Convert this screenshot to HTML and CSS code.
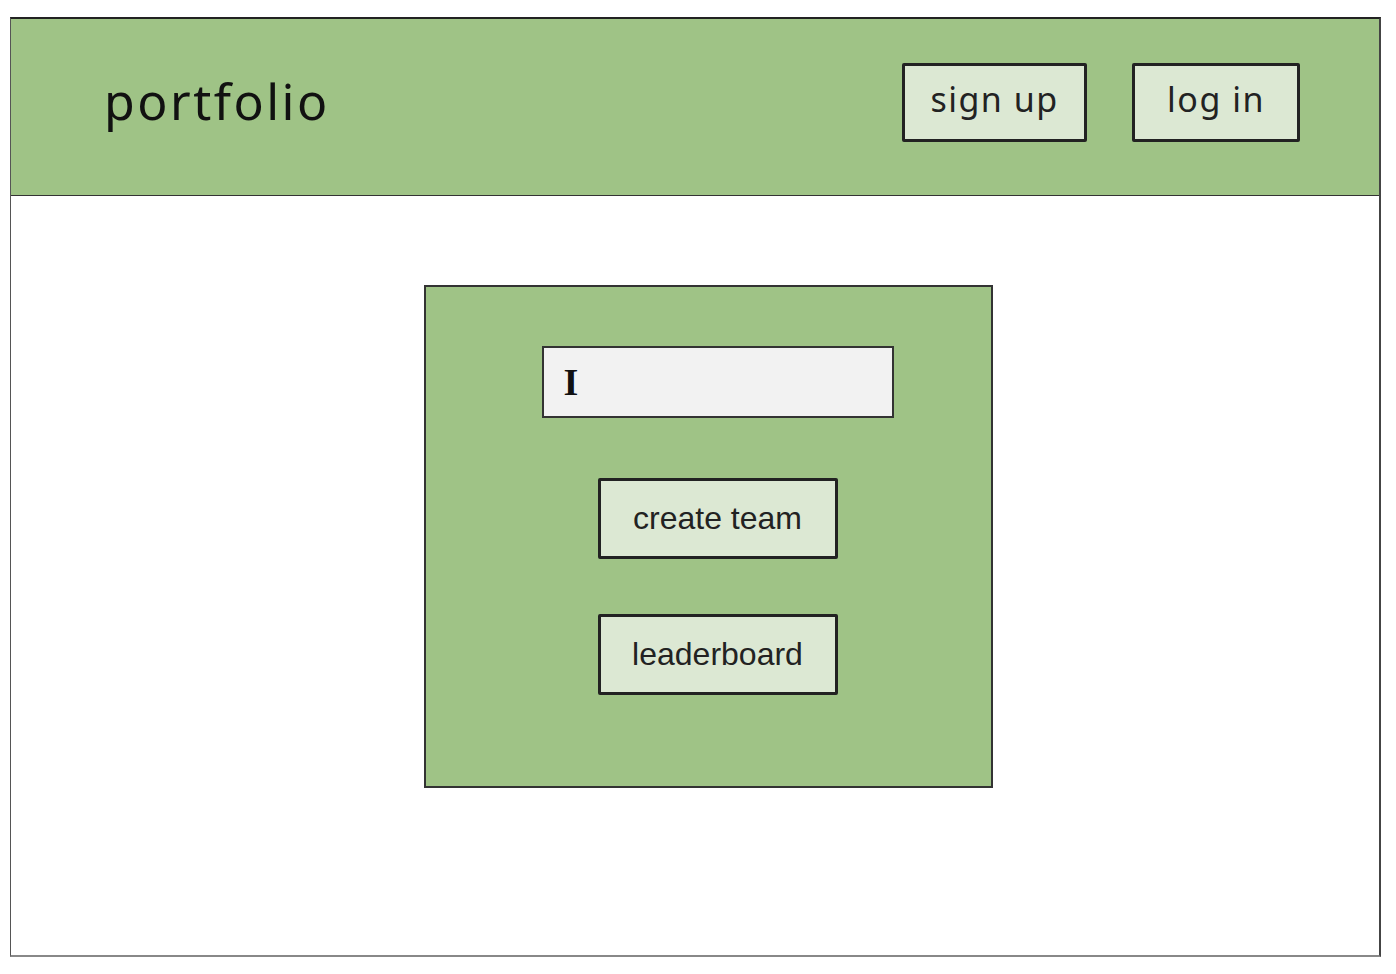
FILE: index.html
```html
<!DOCTYPE html>
<html lang="en">
<head>
    <meta charset="UTF-8">
    <title>portfolio</title>
    <link rel="stylesheet" href="styles.css">
</head>
<body>
    <div class="frame">
        <header class="header">
            <div class="logo">portfolio</div>
            <nav class="nav">
                <button class="nav-button signup">sign up</button>
                <button class="nav-button login">log in</button>
            </nav>
        </header>
        <main class="main">
            <div class="card">
                <div class="team-input"><span class="cursor">I</span></div>
                <button class="card-button first">create team</button>
                <button class="card-button">leaderboard</button>
            </div>
        </main>
    </div>
</body>
</html>
```

FILE: styles.css
```css
body { margin: 0; padding: 17px 0 0 10px; background-color: #fff; font-family: "Liberation Sans", Arial, sans-serif; }
.frame { width: 1368px; height: 936px; border-top: 2px solid #222; border-left: 1px solid #555; border-right: 2px solid #444; border-bottom: 2px solid #888; box-sizing: content-box; display: flex; flex-direction: column; }
.header { height: 177px; background-color: #9fc386; border-bottom: 1px solid #333; display: flex; align-items: center; justify-content: space-between; padding: 0 79px 10px 93px; box-sizing: border-box; }
.logo { font-family: "Noto Sans", sans-serif; font-size: 50px; color: #111; letter-spacing: 2.5px; padding-bottom: 2px; }
.nav { display: flex; gap: 45px; }
.nav-button { height: 79px; background-color: #dce8d3; border: 3px solid #222; border-radius: 2px; font-family: "Noto Sans", sans-serif; font-size: 34px; letter-spacing: 1.5px; color: #222; cursor: pointer; padding: 0 0 6px 0; }
.signup { width: 185px; }
.login { width: 168px; }
.main { flex: 1; padding: 89px 0 0 413px; }
.card { width: 569px; height: 503px; background-color: #9fc386; border: 2px solid #333; box-sizing: border-box; display: flex; flex-direction: column; align-items: center; padding: 59px 0 0 18px; }
.team-input { width: 352px; height: 72px; background-color: #f2f2f2; border: 2px solid #333; box-sizing: border-box; display: flex; align-items: center; padding-left: 20px; }
.cursor { font-family: "Liberation Serif", serif; font-size: 38px; font-weight: bold; color: #111; }
.card-button { width: 240px; height: 81px; margin-top: 55px; background-color: #dce8d3; border: 3px solid #222; border-radius: 2px; font-family: "Liberation Sans", Arial, sans-serif; font-size: 32px; color: #222; cursor: pointer; padding: 0; }
.card-button.first { margin-top: 60px; }
```
